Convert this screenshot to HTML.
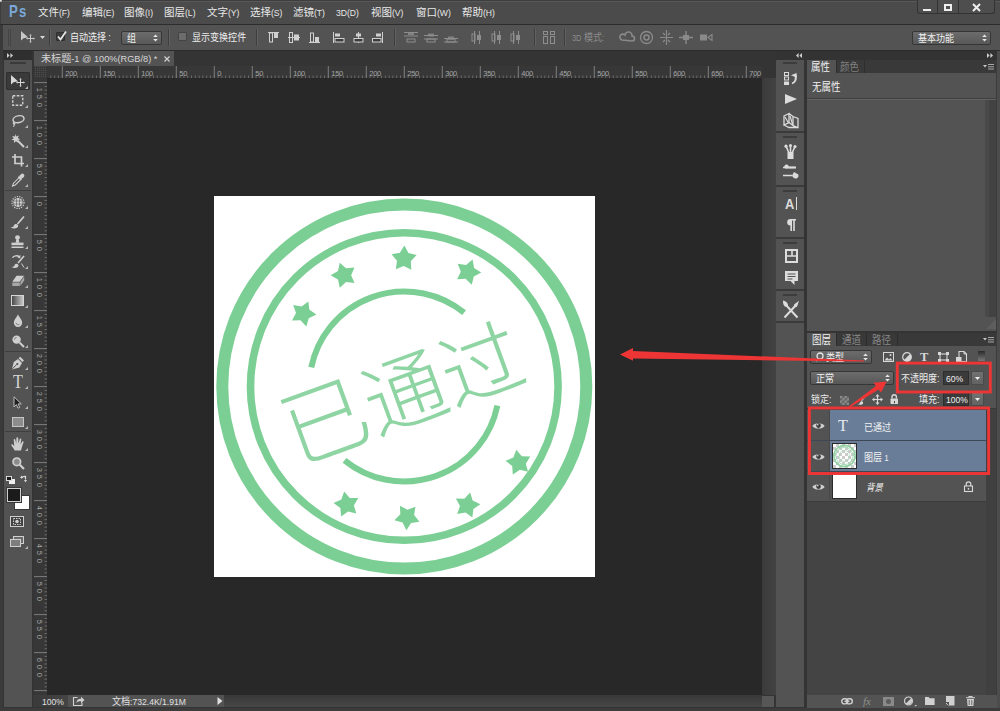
<!DOCTYPE html>
<html lang="zh-CN">
<head>
<meta charset="utf-8">
<title>Photoshop</title>
<style>
html,body{margin:0;padding:0;}
body{width:1000px;height:711px;overflow:hidden;background:#343434;position:relative;
 font-family:"Liberation Sans","Noto Sans CJK SC",sans-serif;font-size:10.5px;color:#e4e4e4;line-height:1;}
.a{position:absolute;}
.t{position:absolute;white-space:nowrap;}
svg{position:absolute;overflow:visible;}
#menubar{left:0;top:0;width:1000px;height:24px;background:#4b4b4b;}
#optbar{left:0;top:25px;width:1000px;height:25px;background:#535353;}
#tabrow{left:33px;top:51px;width:743px;height:15px;background:#343434;}
#doctab{left:34px;top:51px;width:140px;height:15px;background:#535353;}
#hruler{left:34px;top:66px;width:728px;height:12px;background:#373737;}
#vruler{left:34px;top:78px;width:13px;height:617px;background:#373737;}
#canvas{left:47px;top:78px;width:715px;height:617px;background:#282828;}
#doc{left:214px;top:196px;width:380.5px;height:380.5px;background:#fff;}
#status{left:33px;top:695px;width:729px;height:12px;background:#535353;}
#toolbar{left:4px;top:60px;width:28px;height:647px;background:#535353;}
#toolcap{left:4px;top:51px;width:28px;height:9px;background:#2f2f2f;}
#iconstrip{left:776px;top:60px;width:28px;height:647px;background:#535353;}
#rcap{left:776px;top:51px;width:221px;height:9px;background:#333;}
#prop{left:807px;top:60px;width:190px;height:271px;background:#535353;}
#layers{left:807px;top:333px;width:190px;height:375px;background:#535353;}
.mi{position:absolute;top:7px;font-size:10.5px;color:#e8e8e8;white-space:nowrap;}
  .l{font-size:82%;}
.ob{font-size:10.5px;transform:scaleX(.86);transform-origin:0 0;}
.vd{display:block;height:7.5px;transform:rotate(90deg);}
.rl{position:absolute;font-size:7.5px;color:#a6a6a6;white-space:nowrap;letter-spacing:-0.3px;}
</style>
</head>
<body>
<div id="menubar" class="a"></div>
<div id="optbar" class="a"></div>
<div id="tabrow" class="a"></div>
<div id="doctab" class="a"></div>
<div id="hruler" class="a"></div>
<div id="vruler" class="a"></div>
<div id="canvas" class="a"></div>
<div id="doc" class="a"></div>
<div id="status" class="a"></div>
<div id="toolcap" class="a"></div>
<div id="toolbar" class="a"></div>
<div id="rcap" class="a"></div>
<div id="iconstrip" class="a"></div>
<div id="prop" class="a"></div>
<div id="layers" class="a"></div>
<div class="a" style="left:0;top:0;width:1000px;height:1px;background:#3e3e3e"></div><div class="a" style="left:0;top:1px;width:1000px;height:1px;background:#585858"></div><div class="a" style="left:0;top:0;width:1px;height:25px;background:#3e3e3e"></div><div class="a" style="left:0;top:0;width:2px;height:2px;background:#ddd;border-radius:0 0 2px 0"></div>
<div class="a" style="left:0;top:24px;width:1000px;height:1px;background:#2c2c2c"></div>
<div class="a" style="left:0;top:50px;width:1000px;height:1px;background:#2c2c2c"></div>
<div class="a" style="left:0;top:25px;width:3px;height:686px;background:#3a3a3a"></div>
<div class="a" style="left:0;top:708px;width:1000px;height:3px;background:#3c3c3c"></div>
<div class="a" style="left:997px;top:51px;width:3px;height:657px;background:#4c4c4c"></div>
<div class="t" style="left:9px;top:3.2px;font-size:16.5px;font-weight:bold;color:#7aa8d8;letter-spacing:1.6px;transform:scaleX(.8);transform-origin:0 0">Ps</div>
<div class="mi" style="left:38px">文件<span class="l">(F)</span></div>
<div class="mi" style="left:82px">编辑<span class="l">(E)</span></div>
<div class="mi" style="left:124px">图像<span class="l">(I)</span></div>
<div class="mi" style="left:164px">图层<span class="l">(L)</span></div>
<div class="mi" style="left:207px">文字<span class="l">(Y)</span></div>
<div class="mi" style="left:250px">选择<span class="l">(S)</span></div>
<div class="mi" style="left:293px">滤镜<span class="l">(T)</span></div>
<div class="mi" style="left:336px"><span class="l">3D(D)</span></div>
<div class="mi" style="left:371px">视图<span class="l">(V)</span></div>
<div class="mi" style="left:416px">窗口<span class="l">(W)</span></div>
<div class="mi" style="left:462px">帮助<span class="l">(H)</span></div>
<div class="a" style="left:8px;top:29px;width:1px;height:17px;background:#444"></div><div class="a" style="left:10px;top:29px;width:1px;height:17px;background:#444"></div>
<svg style="left:21px;top:31px" width="15" height="13"><path d="M0,0 L0,9.5 L2.6,7.2 L7,6.2 Z" fill="#c8c8c8"/><path d="M9.5,4.2v6.6M6.2,7.5h6.6" stroke="#c8c8c8" stroke-width="1" fill="none"/><path d="M9.5,3l1.3,1.6h-2.6zM9.5,12l1.3,-1.6h-2.6zM5,7.5l1.6,-1.3v2.6zM14,7.5l-1.6,-1.3v2.6z" fill="#c8c8c8"/></svg>
<svg style="left:40px;top:36px" width="6" height="4"><path d="M0,0h5l-2.5,3z" fill="#d8d8d8"/></svg>
<div class="a" style="left:49px;top:29px;width:1px;height:17px;background:#3e3e3e"></div><div class="a" style="left:50px;top:29px;width:1px;height:17px;background:#616161"></div>
<div class="a" style="left:56px;top:32px;width:9px;height:9px;background:#3d3d3d;border:1px solid #2e2e2e;box-sizing:border-box;border-radius:1px"></div>
<svg style="left:56px;top:30px" width="12" height="12"><path d="M2,6.5 L4.5,9.5 L10,1.5" stroke="#e8e8e8" stroke-width="1.7" fill="none"/></svg>
<div class="t ob" style="left:70px;top:31.5px;color:#eee">自动选择<span style="margin-left:2.5px">:</span></div>
<div class="a" style="left:121px;top:31px;width:41px;height:14px;box-sizing:border-box;border:1px solid #363636;border-radius:2px;background:linear-gradient(#6c6c6c,#585858)"></div>
<div class="t ob" style="left:127px;top:32.75px;font-size:10.5px;color:#f0f0f0">组</div>
<svg style="left:152.5px;top:34.0px" width="5" height="8"><path d="M0.2,3L2.5,0.4L4.8,3zM0.2,5L2.5,7.6L4.8,5z" fill="#e8e8e8"/></svg>
<div class="a" style="left:168px;top:29px;width:1px;height:17px;background:#3e3e3e"></div><div class="a" style="left:169px;top:29px;width:1px;height:17px;background:#616161"></div>
<div class="a" style="left:178px;top:32px;width:9px;height:9px;background:#6c6c6c;border:1px solid #444;box-sizing:border-box;border-radius:1px"></div>
<div class="t ob" style="left:192px;top:31.5px;color:#eee">显示变换控件</div>
<div class="a" style="left:256px;top:29px;width:1px;height:17px;background:#3e3e3e"></div><div class="a" style="left:257px;top:29px;width:1px;height:17px;background:#616161"></div>
<svg style="left:268px;top:32px;opacity:1" width="11" height="11"><path d="M0,0.5h11" stroke="#d0d0d0"/><rect x="1.5" y="1" width="3" height="9" fill="none" stroke="#d0d0d0"/><rect x="6" y="1" width="4" height="5" fill="#d0d0d0"/></svg>
<svg style="left:288px;top:32px;opacity:1" width="12" height="11"><path d="M0,5.5h12" stroke="#d0d0d0"/><rect x="1.5" y="0.5" width="3" height="10" fill="none" stroke="#d0d0d0"/><rect x="6" y="2.5" width="5" height="6" fill="#d0d0d0"/></svg>
<svg style="left:309px;top:32px;opacity:1" width="11" height="11"><path d="M0,10.5h11" stroke="#d0d0d0"/><rect x="1.5" y="1" width="3" height="9" fill="none" stroke="#d0d0d0"/><rect x="6" y="5" width="4" height="5" fill="#d0d0d0"/></svg>
<svg style="left:333px;top:31.5px;opacity:1" width="12" height="11"><path d="M0.5,0v11" stroke="#d0d0d0"/><rect x="2" y="1.5" width="5" height="3" fill="#d0d0d0"/><rect x="2" y="6.5" width="9" height="3.5" fill="#3c3c3c" stroke="#d0d0d0"/></svg>
<svg style="left:353px;top:31.5px;opacity:1" width="12" height="11"><path d="M5.5,0v11" stroke="#d0d0d0"/><rect x="3" y="1.5" width="5" height="3" fill="#d0d0d0"/><rect x="1" y="6.5" width="9" height="3.5" fill="#3c3c3c" stroke="#d0d0d0"/></svg>
<svg style="left:372px;top:31.5px;opacity:1" width="12" height="11"><path d="M10.5,0v11" stroke="#d0d0d0"/><rect x="4" y="1.5" width="5" height="3" fill="#d0d0d0"/><rect x="0.5" y="6.5" width="8.5" height="3.5" fill="#3c3c3c" stroke="#d0d0d0"/></svg>
<div class="a" style="left:394px;top:29px;width:1px;height:17px;background:#3e3e3e"></div><div class="a" style="left:395px;top:29px;width:1px;height:17px;background:#616161"></div>
<svg style="left:404px;top:32px;opacity:1" width="14" height="11"><path d="M0,0.5h14M0,4.0h14" stroke="#8e8e8e" stroke-width="1"/><rect x="4" y="0" width="6" height="3" fill="#8e8e8e" opacity=".8"/><rect x="3" y="7" width="8" height="3" fill="none" stroke="#8e8e8e"/></svg>
<svg style="left:424px;top:32px;opacity:1" width="14" height="11"><path d="M0,3.5h14M0,7.0h14" stroke="#8e8e8e" stroke-width="1"/><rect x="4" y="1.5" width="6" height="3" fill="#8e8e8e" opacity=".8"/><rect x="3" y="7" width="8" height="3" fill="none" stroke="#8e8e8e"/></svg>
<svg style="left:444px;top:32px;opacity:1" width="14" height="11"><path d="M0,6.5h14M0,10.0h14" stroke="#8e8e8e" stroke-width="1"/><rect x="4" y="4.5" width="6" height="3" fill="#8e8e8e" opacity=".8"/><rect x="3" y="7" width="8" height="3" fill="none" stroke="#8e8e8e"/></svg>
<svg style="left:471px;top:31px;opacity:1" width="12" height="13"><path d="M3.5,0v13M8.5,0v13" stroke="#8e8e8e" stroke-width="1"/><rect x="1" y="3" width="3" height="7" fill="none" stroke="#8e8e8e"/><rect x="6" y="4" width="4" height="5" fill="#8e8e8e"/></svg>
<svg style="left:491px;top:31px;opacity:1" width="12" height="13"><path d="M3.5,0v13M8.5,0v13" stroke="#8e8e8e" stroke-width="1"/><rect x="1" y="3" width="3" height="7" fill="none" stroke="#8e8e8e"/><rect x="6" y="4" width="4" height="5" fill="#8e8e8e"/></svg>
<svg style="left:510px;top:31px;opacity:1" width="12" height="13"><path d="M3.5,0v13M8.5,0v13" stroke="#8e8e8e" stroke-width="1"/><rect x="1" y="3" width="3" height="7" fill="none" stroke="#8e8e8e"/><rect x="6" y="4" width="4" height="5" fill="#8e8e8e"/></svg>
<div class="a" style="left:534px;top:29px;width:1px;height:17px;background:#3e3e3e"></div><div class="a" style="left:535px;top:29px;width:1px;height:17px;background:#616161"></div>
<svg style="left:543px;top:31px;opacity:1" width="13" height="13"><rect x="0.5" y="0.5" width="4" height="3" fill="none" stroke="#8e8e8e"/><rect x="7.5" y="0.5" width="4" height="3" fill="none" stroke="#8e8e8e"/><rect x="0.5" y="5.5" width="4" height="7" fill="none" stroke="#8e8e8e"/><rect x="7.5" y="5.5" width="4" height="7" fill="none" stroke="#8e8e8e"/></svg>
<div class="a" style="left:564px;top:29px;width:1px;height:17px;background:#3e3e3e"></div><div class="a" style="left:565px;top:29px;width:1px;height:17px;background:#616161"></div>
<div class="t ob" style="left:572px;top:31.5px;color:#8c8c8c"><span class="l">3D</span> 模式<span class="l">:</span></div>
<svg style="left:620px;top:31px;opacity:1" width="15" height="13"><path d="M2,9a3,3 0 1 1 3,-5a3.5,3.5 0 0 1 7,1a2.5,2.5 0 0 1 0,5z" fill="none" stroke="#8a8a8a" stroke-width="1.6"/></svg>
<svg style="left:639px;top:30px;opacity:1" width="15" height="15"><circle cx="7.5" cy="7.5" r="6" fill="none" stroke="#8a8a8a" stroke-width="1.3"/><circle cx="7.5" cy="7.5" r="2.5" fill="none" stroke="#8a8a8a" stroke-width="1.5"/></svg>
<svg style="left:660px;top:30px;opacity:1" width="13" height="15"><path d="M6.5,0v15M0,7.5h13" stroke="#8a8a8a" stroke-width="1.2"/><path d="M3,3l2,2M10,3l-2,2M3,12l2,-2M10,12l-2,-2" stroke="#8a8a8a" stroke-width="1.2"/></svg>
<svg style="left:679px;top:31px;opacity:1" width="14" height="13"><path d="M7,0v13M0,6.5h14" stroke="#8a8a8a" stroke-width="1.4"/><rect x="4" y="4" width="6" height="5" fill="#8a8a8a"/></svg>
<svg style="left:700px;top:34px;opacity:1" width="13" height="7"><rect x="0" y="0.5" width="7" height="6" fill="#8a8a8a"/><path d="M8,3.5l4,-3v6z" fill="none" stroke="#8a8a8a" stroke-width="1.1"/></svg>
<div class="a" style="left:912px;top:31px;width:79px;height:14px;box-sizing:border-box;border:1px solid #363636;border-radius:2px;background:linear-gradient(#6c6c6c,#585858)"></div>
<div class="t ob" style="left:918px;top:32.75px;font-size:10.5px;color:#f0f0f0">基本功能</div>
<svg style="left:981.5px;top:34.0px" width="5" height="8"><path d="M0.2,3L2.5,0.4L4.8,3zM0.2,5L2.5,7.6L4.8,5z" fill="#e8e8e8"/></svg>
<div class="a" style="left:917px;top:0;width:78px;height:14px;background:#4e4e4e;border:1px solid #333;border-top:none;box-sizing:border-box;border-radius:0 0 3px 3px"></div>
<div class="a" style="left:937px;top:0;width:1px;height:13px;background:#333"></div><div class="a" style="left:958px;top:0;width:1px;height:13px;background:#333"></div>
<div class="a" style="left:923px;top:9px;width:8px;height:2px;background:#eee"></div>
<div class="a" style="left:944px;top:4px;width:8px;height:7px;border:2px solid #eee;box-sizing:border-box"></div>
<svg style="left:972px;top:3px" width="9" height="9"><path d="M1,1l7,7M8,1l-7,7" stroke="#eee" stroke-width="2"/></svg>
<svg style="left:7px;top:53px" width="7" height="5"><path d="M0,0l2.6,2.5l-2.6,2.5zM3.4,0l2.6,2.5l-2.6,2.5z" fill="#d0d0d0"/></svg>
<div class="a" style="left:10px;top:62px;width:16px;height:2px;background:#3a3a3a"></div>
<div class="a" style="left:6px;top:72px;width:24px;height:18px;background:#3a3a3a;border-radius:2px;box-shadow:inset 0 0 0 1px #2e2e2e"></div>
<svg style="left:11px;top:75px" width="17" height="13"><path d="M0,0 L0,9.5 L2.6,7.2 L7,6.2 Z" fill="#d8d8d8"/><path d="M9.5,4.2v6.6M6.2,7.5h6.6" stroke="#d8d8d8" stroke-width="1" fill="none"/><path d="M9.5,3l1.3,1.6h-2.6zM9.5,12l1.3,-1.6h-2.6zM5,7.5l1.6,-1.3v2.6zM14,7.5l-1.6,-1.3v2.6z" fill="#d8d8d8"/></svg>
<svg style="left:25px;top:86px" width="3" height="3"><path d="M3,0v3h-3z" fill="#b8b8b8"/></svg>
<svg style="left:12px;top:95px" width="12" height="11"><rect x="0.75" y="0.75" width="10" height="9.5" fill="none" stroke="#cfcfcf" stroke-width="1.4" stroke-dasharray="2.6 1.4"/></svg>
<svg style="left:25px;top:105px" width="3" height="3"><path d="M3,0v3h-3z" fill="#b8b8b8"/></svg>
<svg style="left:11px;top:115px" width="14" height="12"><ellipse cx="7.5" cy="4.2" rx="5.6" ry="3.4" fill="none" stroke="#cfcfcf" stroke-width="1.5" transform="rotate(-12 7.5 4.2)"/><path d="M3,7c-1.5,1 -0.5,2.5 0.5,2.2c0.8,-0.3 0.2,-1.6 -0.6,-1M3.4,9.2l-0.8,2.6" fill="none" stroke="#cfcfcf" stroke-width="1.1"/></svg>
<svg style="left:25px;top:125px" width="3" height="3"><path d="M3,0v3h-3z" fill="#b8b8b8"/></svg>
<svg style="left:11px;top:134px" width="14" height="14"><path d="M4.5,0l0.9,2.6l2.6,-1l-1.2,2.5l2.4,1.2l-2.6,0.8l0.6,2.7l-2.3,-1.6l-2,1.9l0.2,-2.8l-2.8,-0.5l2.4,-1.4l-1.5,-2.4l2.8,0.6z" fill="#cfcfcf"/><path d="M6.5,6.5l6.5,6.5" stroke="#cfcfcf" stroke-width="1.9"/></svg>
<svg style="left:25px;top:145px" width="3" height="3"><path d="M3,0v3h-3z" fill="#b8b8b8"/></svg>
<svg style="left:12px;top:154px" width="12" height="13"><path d="M3,0v9.5h9M0,3h9.5v9.5" fill="none" stroke="#cfcfcf" stroke-width="1.7"/></svg>
<svg style="left:25px;top:164px" width="3" height="3"><path d="M3,0v3h-3z" fill="#b8b8b8"/></svg>
<svg style="left:12px;top:173px" width="13" height="14"><path d="M0.5,13l1,-2.8l5.5,-5.5l1.8,1.8l-5.5,5.5z" fill="none" stroke="#cfcfcf" stroke-width="1.1"/><path d="M6.5,3.5l3,3M8,5l2,-2" stroke="#cfcfcf" stroke-width="1.8"/><path d="M9,1.2a1.9,1.9 0 0 1 2.8,2.8l-1.6,1.6l-2.8,-2.8z" fill="#cfcfcf"/></svg>
<svg style="left:25px;top:184px" width="3" height="3"><path d="M3,0v3h-3z" fill="#b8b8b8"/></svg>
<div class="a" style="left:5px;top:190px;width:26px;height:1px;background:#3f3f3f"></div>
<svg style="left:11px;top:196px" width="14" height="13"><circle cx="7" cy="6.5" r="4.6" fill="#cfcfcf"/><circle cx="7" cy="6.5" r="6" fill="none" stroke="#cfcfcf" stroke-width="1.2" stroke-dasharray="1.2 1.2"/><path d="M3,5h8M3,8h8M5.5,2.5v8M8.5,2.5v8" stroke="#535353" stroke-width=".6"/></svg>
<svg style="left:25px;top:206px" width="3" height="3"><path d="M3,0v3h-3z" fill="#b8b8b8"/></svg>
<svg style="left:10px;top:216px" width="15" height="13"><path d="M14,0.5l-6.5,7.5" stroke="#cfcfcf" stroke-width="1.7"/><path d="M0.5,11.5c2,0 3,-0.6 3.6,-2.4c0.5,-1.2 2.4,-1.5 3.4,-0.6c1.1,1 0.8,2.4 -0.4,3.2c-1.8,1.2 -4.5,1 -6.6,-0.2z" fill="#cfcfcf"/></svg>
<svg style="left:25px;top:226px" width="3" height="3"><path d="M3,0v3h-3z" fill="#b8b8b8"/></svg>
<svg style="left:11px;top:235px" width="13" height="14"><circle cx="6.5" cy="2.6" r="2.4" fill="#cfcfcf"/><path d="M5.2,4.5h2.6l0.5,3.2h-3.6z" fill="#cfcfcf"/><rect x="0.5" y="7.6" width="12" height="2.6" fill="#cfcfcf"/><rect x="0.5" y="11.5" width="12" height="1.5" fill="#cfcfcf"/></svg>
<svg style="left:25px;top:246px" width="3" height="3"><path d="M3,0v3h-3z" fill="#b8b8b8"/></svg>
<svg style="left:11px;top:255px" width="14" height="13"><path d="M13,1l-6,7" stroke="#cfcfcf" stroke-width="1.6"/><path d="M0.5,12c2,0 2.8,-0.6 3.3,-2.2c0.4,-1.1 2.2,-1.4 3.1,-0.5c1,0.9 0.7,2.2 -0.4,2.9c-1.6,1 -4,0.9 -6,-0.2z" fill="#cfcfcf"/><path d="M1.5,2.8a4,3 0 0 1 7,-0.8" fill="none" stroke="#cfcfcf" stroke-width="1.3"/><path d="M9.5,0l-0.3,3.4l-3,-1.2z" fill="#cfcfcf"/><path d="M10.5,8.5l2.5,4" stroke="#cfcfcf" stroke-width="1"/></svg>
<svg style="left:25px;top:266px" width="3" height="3"><path d="M3,0v3h-3z" fill="#b8b8b8"/></svg>
<svg style="left:11px;top:275px" width="14" height="12"><path d="M5.5,0.8h7.5l-4.2,6h-7.5z" fill="#cfcfcf"/><path d="M1.3,7.5h7.5v3.6h-7.5zM9.4,7.2l3.8,-5.6v3.8l-3.8,5.5z" fill="#a8a8a8"/></svg>
<svg style="left:25px;top:285px" width="3" height="3"><path d="M3,0v3h-3z" fill="#b8b8b8"/></svg>
<div class="a" style="left:11px;top:295px;width:13px;height:11px;box-sizing:border-box;border:1px solid #d6d6d6;background:linear-gradient(90deg,#4a4a4a,#c8c8c8)"></div>
<svg style="left:25px;top:305px" width="3" height="3"><path d="M3,0v3h-3z" fill="#b8b8b8"/></svg>
<svg style="left:13px;top:314px" width="10" height="13"><path d="M5,0.5c1.2,3 4.2,5.2 4.2,8.2a4.2,4.2 0 0 1 -8.4,0c0,-3 3,-5.2 4.2,-8.2z" fill="#cfcfcf"/><path d="M3,9a2.2,2.2 0 0 0 3.5,1.2" stroke="#777" stroke-width="1" fill="none"/></svg>
<svg style="left:25px;top:325px" width="3" height="3"><path d="M3,0v3h-3z" fill="#b8b8b8"/></svg>
<svg style="left:12px;top:335px" width="13" height="13"><circle cx="4.6" cy="4.6" r="4.2" fill="#cfcfcf"/><path d="M7.5,7.5l4.5,4.5" stroke="#cfcfcf" stroke-width="2"/><path d="M2.5,4.5a2.2,2.2 0 0 1 2,-2" stroke="#777" stroke-width="1" fill="none"/></svg>
<svg style="left:25px;top:345px" width="3" height="3"><path d="M3,0v3h-3z" fill="#b8b8b8"/></svg>
<div class="a" style="left:5px;top:351px;width:26px;height:1px;background:#3f3f3f"></div>
<svg style="left:11px;top:356px" width="14" height="14"><path d="M9.2,0.8l3.8,3.8l-1.6,1.4l-3.8,-3.8z" fill="#cfcfcf"/><path d="M7,3l4,4l-2.6,4.6l-7.6,2l2,-7.6z" fill="#cfcfcf"/><path d="M1.2,13l4.6,-4.6" stroke="#535353" stroke-width="1"/><circle cx="6.3" cy="8" r="1.1" fill="#535353"/></svg>
<svg style="left:25px;top:367px" width="3" height="3"><path d="M3,0v3h-3z" fill="#b8b8b8"/></svg>
<div class="t" style="left:12.5px;top:372.5px;font-family:'Liberation Serif',serif;font-size:18px;color:#d6d6d6;transform:scaleX(.9);transform-origin:0 0">T</div>
<svg style="left:25px;top:386px" width="3" height="3"><path d="M3,0v3h-3z" fill="#b8b8b8"/></svg>
<svg style="left:13px;top:396px" width="9" height="13"><path d="M1,0.8v10l2.4,-2.2l1.6,3.6l1.7,-0.8l-1.6,-3.5h3.2z" fill="#1e1e1e" stroke="#bdbdbd" stroke-width="1"/></svg>
<svg style="left:25px;top:406px" width="3" height="3"><path d="M3,0v3h-3z" fill="#b8b8b8"/></svg>
<div class="a" style="left:12px;top:417px;width:12px;height:10px;box-sizing:border-box;border:1px solid #c6c6c6;background:#8d8d8d"></div>
<svg style="left:25px;top:426px" width="3" height="3"><path d="M3,0v3h-3z" fill="#b8b8b8"/></svg>
<div class="a" style="left:5px;top:431px;width:26px;height:1px;background:#3f3f3f"></div>
<svg style="left:11px;top:437px" width="14" height="14"><path d="M3.6,13.5c-0.6,-2 -2.6,-3.6 -3.2,-5.2c-0.3,-1 0.9,-1.5 1.6,-0.6l1.3,1.6l-0.6,-6.2c-0.1,-1.2 1.4,-1.4 1.7,-0.2l0.8,3.8l0.2,-5.4c0,-1.3 1.7,-1.3 1.8,0l0.3,5.3l1.2,-4.4c0.3,-1.2 1.8,-0.8 1.6,0.4l-0.8,4.8l1.6,-2.6c0.6,-1 1.9,-0.3 1.4,0.8c-1.2,2.6 -1.6,5.2 -2.6,7.9z" fill="#cfcfcf"/></svg>
<svg style="left:25px;top:448px" width="3" height="3"><path d="M3,0v3h-3z" fill="#b8b8b8"/></svg>
<svg style="left:12px;top:457px" width="13" height="13"><circle cx="4.8" cy="4.8" r="3.8" fill="#8c8c8c" stroke="#cfcfcf" stroke-width="1.7"/><path d="M7.8,7.8l4.2,4.2" stroke="#cfcfcf" stroke-width="2.2"/></svg>
<div class="a" style="left:9px;top:479px;width:6px;height:5px;background:#eee"></div><div class="a" style="left:6px;top:476px;width:6px;height:5px;background:#1c1c1c;border:1px solid #d8d8d8;box-sizing:border-box"></div>
<svg style="left:20px;top:475px" width="8" height="8"><path d="M1.5,3.5c0,-2 2,-2.2 4,-2.2v3.2" fill="none" stroke="#d8d8d8" stroke-width="1.2"/><path d="M0,3l1.5,-2.4l1.5,2.4zM4,5l1.5,2.4l1.5,-2.4z" fill="#d8d8d8"/></svg>
<div class="a" style="left:15px;top:496px;width:14px;height:13px;background:#fff;box-shadow:0 0 0 1px #3a3a3a"></div>
<div class="a" style="left:7px;top:488px;width:14px;height:14px;background:#1b1b1b;border:1px solid #cfcfcf;box-sizing:border-box;box-shadow:0 0 0 1px #3a3a3a"></div>
<div class="a" style="left:10px;top:516px;width:14px;height:11px;box-sizing:border-box;border:1px solid #cfcfcf;background:#424242"></div>
<svg style="left:13px;top:518px" width="8" height="7"><rect x="0.5" y="0.5" width="7" height="6" fill="none" stroke="#cfcfcf" stroke-dasharray="1.5 1"/><circle cx="4" cy="3.5" r="1.8" fill="#cfcfcf"/></svg>
<div class="a" style="left:13px;top:536px;width:11px;height:8px;box-sizing:border-box;border:1px solid #cfcfcf;background:#6a6a6a"></div><div class="a" style="left:10px;top:539px;width:11px;height:8px;box-sizing:border-box;border:1px solid #cfcfcf;background:#7d7d7d"></div>
<svg style="left:25px;top:546px" width="3" height="3"><path d="M3,0v3h-3z" fill="#b8b8b8"/></svg>
<div class="t" style="left:41px;top:53px;font-size:10.5px;color:#d6d6d6;transform:scaleX(.96);transform-origin:0 0">未标题<span style="font-size:9.6px">-1 @ 100%(RGB/8) *</span></div>
<svg style="left:164px;top:56px" width="6" height="6"><path d="M0.5,0.5l5,5M5.5,0.5l-5,5" stroke="#d0d0d0" stroke-width="1.2"/></svg>
<div class="a" style="left:34px;top:66px;width:13px;height:12px;background:#4a4a4a;background-image:repeating-linear-gradient(90deg,rgba(0,0,0,.18) 0 1px,transparent 1px 2px),repeating-linear-gradient(0deg,rgba(0,0,0,.18) 0 1px,transparent 1px 2px)"></div>
<svg style="left:47px;top:66px" width="715" height="12"><path d="M3.9,9.5v2.5M7.7,9.5v2.5M11.5,9.5v2.5M15.3,9.5v2.5M19.1,9.5v2.5M22.9,9.5v2.5M26.7,9.5v2.5M30.5,9.5v2.5M34.3,9.5v2.5M38.1,9.5v2.5M41.9,9.5v2.5M45.7,9.5v2.5M49.5,9.5v2.5M53.3,9.5v2.5M57.1,9.5v2.5M60.9,9.5v2.5M64.7,9.5v2.5M68.5,9.5v2.5M72.3,9.5v2.5M76.1,9.5v2.5M79.9,9.5v2.5M83.7,9.5v2.5M87.5,9.5v2.5M91.3,9.5v2.5M95.1,9.5v2.5M98.9,9.5v2.5M102.7,9.5v2.5M106.5,9.5v2.5M110.3,9.5v2.5M114.1,9.5v2.5M117.9,9.5v2.5M121.7,9.5v2.5M125.5,9.5v2.5M129.3,9.5v2.5M133.1,9.5v2.5M136.9,9.5v2.5M140.7,9.5v2.5M144.5,9.5v2.5M148.3,9.5v2.5M152.1,9.5v2.5M155.9,9.5v2.5M159.7,9.5v2.5M163.5,9.5v2.5M167.3,9.5v2.5M171.1,9.5v2.5M174.9,9.5v2.5M178.7,9.5v2.5M182.5,9.5v2.5M186.3,9.5v2.5M190.1,9.5v2.5M193.9,9.5v2.5M197.7,9.5v2.5M201.5,9.5v2.5M205.3,9.5v2.5M209.1,9.5v2.5M212.9,9.5v2.5M216.7,9.5v2.5M220.5,9.5v2.5M224.3,9.5v2.5M228.1,9.5v2.5M231.9,9.5v2.5M235.7,9.5v2.5M239.5,9.5v2.5M243.3,9.5v2.5M247.1,9.5v2.5M250.9,9.5v2.5M254.7,9.5v2.5M258.5,9.5v2.5M262.3,9.5v2.5M266.1,9.5v2.5M269.9,9.5v2.5M273.7,9.5v2.5M277.5,9.5v2.5M281.3,9.5v2.5M285.1,9.5v2.5M288.9,9.5v2.5M292.7,9.5v2.5M296.5,9.5v2.5M300.3,9.5v2.5M304.1,9.5v2.5M307.9,9.5v2.5M311.7,9.5v2.5M315.5,9.5v2.5M319.3,9.5v2.5M323.1,9.5v2.5M326.9,9.5v2.5M330.7,9.5v2.5M334.5,9.5v2.5M338.3,9.5v2.5M342.1,9.5v2.5M345.9,9.5v2.5M349.7,9.5v2.5M353.5,9.5v2.5M357.3,9.5v2.5M361.1,9.5v2.5M364.9,9.5v2.5M368.7,9.5v2.5M372.5,9.5v2.5M376.3,9.5v2.5M380.1,9.5v2.5M383.9,9.5v2.5M387.7,9.5v2.5M391.5,9.5v2.5M395.3,9.5v2.5M399.1,9.5v2.5M402.9,9.5v2.5M406.7,9.5v2.5M410.5,9.5v2.5M414.3,9.5v2.5M418.1,9.5v2.5M421.9,9.5v2.5M425.7,9.5v2.5M429.5,9.5v2.5M433.3,9.5v2.5M437.1,9.5v2.5M440.9,9.5v2.5M444.7,9.5v2.5M448.5,9.5v2.5M452.3,9.5v2.5M456.1,9.5v2.5M459.9,9.5v2.5M463.7,9.5v2.5M467.5,9.5v2.5M471.3,9.5v2.5M475.1,9.5v2.5M478.9,9.5v2.5M482.7,9.5v2.5M486.5,9.5v2.5M490.3,9.5v2.5M494.1,9.5v2.5M497.9,9.5v2.5M501.7,9.5v2.5M505.5,9.5v2.5M509.3,9.5v2.5M513.1,9.5v2.5M516.9,9.5v2.5M520.7,9.5v2.5M524.5,9.5v2.5M528.3,9.5v2.5M532.1,9.5v2.5M535.9,9.5v2.5M539.7,9.5v2.5M543.5,9.5v2.5M547.3,9.5v2.5M551.1,9.5v2.5M554.9,9.5v2.5M558.7,9.5v2.5M562.5,9.5v2.5M566.3,9.5v2.5M570.1,9.5v2.5M573.9,9.5v2.5M577.7,9.5v2.5M581.5,9.5v2.5M585.3,9.5v2.5M589.1,9.5v2.5M592.9,9.5v2.5M596.7,9.5v2.5M600.5,9.5v2.5M604.3,9.5v2.5M608.1,9.5v2.5M611.9,9.5v2.5M615.7,9.5v2.5M619.5,9.5v2.5M623.3,9.5v2.5M627.1,9.5v2.5M630.9,9.5v2.5M634.7,9.5v2.5M638.5,9.5v2.5M642.3,9.5v2.5M646.1,9.5v2.5M649.9,9.5v2.5M653.7,9.5v2.5M657.5,9.5v2.5M661.3,9.5v2.5M665.1,9.5v2.5M668.9,9.5v2.5M672.7,9.5v2.5M676.5,9.5v2.5M680.3,9.5v2.5M684.1,9.5v2.5M687.9,9.5v2.5M691.7,9.5v2.5M695.5,9.5v2.5M699.3,9.5v2.5M703.1,9.5v2.5M706.9,9.5v2.5M710.7,9.5v2.5" stroke="#7c7c7c" stroke-width="1" fill="none" opacity=".75"/><path d="M15.3,0v12M53.3,0v12M91.3,0v12M129.3,0v12M167.3,0v12M205.3,0v12M243.3,0v12M281.3,0v12M319.3,0v12M357.3,0v12M395.3,0v12M433.3,0v12M471.3,0v12M509.3,0v12M547.3,0v12M585.3,0v12M623.3,0v12M661.3,0v12M699.3,0v12" stroke="#7c7c7c" stroke-width="1" fill="none"/></svg>
<div class="rl" style="left:65.3px;top:70px">200</div><div class="rl" style="left:103.3px;top:70px">150</div><div class="rl" style="left:141.3px;top:70px">100</div><div class="rl" style="left:179.3px;top:70px">50</div><div class="rl" style="left:217.3px;top:70px">0</div><div class="rl" style="left:255.3px;top:70px">50</div><div class="rl" style="left:293.3px;top:70px">100</div><div class="rl" style="left:331.3px;top:70px">150</div><div class="rl" style="left:369.3px;top:70px">200</div><div class="rl" style="left:407.3px;top:70px">250</div><div class="rl" style="left:445.3px;top:70px">300</div><div class="rl" style="left:483.3px;top:70px">350</div><div class="rl" style="left:521.3px;top:70px">400</div><div class="rl" style="left:559.3px;top:70px">450</div><div class="rl" style="left:597.3px;top:70px">500</div><div class="rl" style="left:635.3px;top:70px">550</div><div class="rl" style="left:673.3px;top:70px">600</div><div class="rl" style="left:711.3px;top:70px">650</div><div class="rl" style="left:749.3px;top:70px">700</div>
<svg style="left:34px;top:78px" width="13" height="617"><path d="M10.5,4.6h2.5M10.5,8.4h2.5M10.5,12.2h2.5M10.5,16.0h2.5M10.5,19.8h2.5M10.5,23.6h2.5M10.5,27.4h2.5M10.5,31.2h2.5M10.5,35.0h2.5M10.5,38.8h2.5M10.5,42.6h2.5M10.5,46.4h2.5M10.5,50.2h2.5M10.5,54.0h2.5M10.5,57.8h2.5M10.5,61.6h2.5M10.5,65.4h2.5M10.5,69.2h2.5M10.5,73.0h2.5M10.5,76.8h2.5M10.5,80.6h2.5M10.5,84.4h2.5M10.5,88.2h2.5M10.5,92.0h2.5M10.5,95.8h2.5M10.5,99.6h2.5M10.5,103.4h2.5M10.5,107.2h2.5M10.5,111.0h2.5M10.5,114.8h2.5M10.5,118.6h2.5M10.5,122.4h2.5M10.5,126.2h2.5M10.5,130.0h2.5M10.5,133.8h2.5M10.5,137.6h2.5M10.5,141.4h2.5M10.5,145.2h2.5M10.5,149.0h2.5M10.5,152.8h2.5M10.5,156.6h2.5M10.5,160.4h2.5M10.5,164.2h2.5M10.5,168.0h2.5M10.5,171.8h2.5M10.5,175.6h2.5M10.5,179.4h2.5M10.5,183.2h2.5M10.5,187.0h2.5M10.5,190.8h2.5M10.5,194.6h2.5M10.5,198.4h2.5M10.5,202.2h2.5M10.5,206.0h2.5M10.5,209.8h2.5M10.5,213.6h2.5M10.5,217.4h2.5M10.5,221.2h2.5M10.5,225.0h2.5M10.5,228.8h2.5M10.5,232.6h2.5M10.5,236.4h2.5M10.5,240.2h2.5M10.5,244.0h2.5M10.5,247.8h2.5M10.5,251.6h2.5M10.5,255.4h2.5M10.5,259.2h2.5M10.5,263.0h2.5M10.5,266.8h2.5M10.5,270.6h2.5M10.5,274.4h2.5M10.5,278.2h2.5M10.5,282.0h2.5M10.5,285.8h2.5M10.5,289.6h2.5M10.5,293.4h2.5M10.5,297.2h2.5M10.5,301.0h2.5M10.5,304.8h2.5M10.5,308.6h2.5M10.5,312.4h2.5M10.5,316.2h2.5M10.5,320.0h2.5M10.5,323.8h2.5M10.5,327.6h2.5M10.5,331.4h2.5M10.5,335.2h2.5M10.5,339.0h2.5M10.5,342.8h2.5M10.5,346.6h2.5M10.5,350.4h2.5M10.5,354.2h2.5M10.5,358.0h2.5M10.5,361.8h2.5M10.5,365.6h2.5M10.5,369.4h2.5M10.5,373.2h2.5M10.5,377.0h2.5M10.5,380.8h2.5M10.5,384.6h2.5M10.5,388.4h2.5M10.5,392.2h2.5M10.5,396.0h2.5M10.5,399.8h2.5M10.5,403.6h2.5M10.5,407.4h2.5M10.5,411.2h2.5M10.5,415.0h2.5M10.5,418.8h2.5M10.5,422.6h2.5M10.5,426.4h2.5M10.5,430.2h2.5M10.5,434.0h2.5M10.5,437.8h2.5M10.5,441.6h2.5M10.5,445.4h2.5M10.5,449.2h2.5M10.5,453.0h2.5M10.5,456.8h2.5M10.5,460.6h2.5M10.5,464.4h2.5M10.5,468.2h2.5M10.5,472.0h2.5M10.5,475.8h2.5M10.5,479.6h2.5M10.5,483.4h2.5M10.5,487.2h2.5M10.5,491.0h2.5M10.5,494.8h2.5M10.5,498.6h2.5M10.5,502.4h2.5M10.5,506.2h2.5M10.5,510.0h2.5M10.5,513.8h2.5M10.5,517.6h2.5M10.5,521.4h2.5M10.5,525.2h2.5M10.5,529.0h2.5M10.5,532.8h2.5M10.5,536.6h2.5M10.5,540.4h2.5M10.5,544.2h2.5M10.5,548.0h2.5M10.5,551.8h2.5M10.5,555.6h2.5M10.5,559.4h2.5M10.5,563.2h2.5M10.5,567.0h2.5M10.5,570.8h2.5M10.5,574.6h2.5M10.5,578.4h2.5M10.5,582.2h2.5M10.5,586.0h2.5M10.5,589.8h2.5M10.5,593.6h2.5M10.5,597.4h2.5M10.5,601.2h2.5M10.5,605.0h2.5M10.5,608.8h2.5M10.5,612.6h2.5" stroke="#7c7c7c" stroke-width="1" fill="none" opacity=".75"/><path d="M0,4.6h13M0,42.6h13M0,80.6h13M0,118.6h13M0,156.6h13M0,194.6h13M0,232.6h13M0,270.6h13M0,308.6h13M0,346.6h13M0,384.6h13M0,422.6h13M0,460.6h13M0,498.6h13M0,536.6h13M0,574.6h13M0,612.6h13" stroke="#7c7c7c" stroke-width="1" fill="none"/></svg>
<div class="rl" style="left:36.5px;top:85.6px;line-height:7.5px;text-align:center;width:5px"><span class="vd">1</span><span class="vd">5</span><span class="vd">0</span></div><div class="rl" style="left:36.5px;top:123.6px;line-height:7.5px;text-align:center;width:5px"><span class="vd">1</span><span class="vd">0</span><span class="vd">0</span></div><div class="rl" style="left:36.5px;top:161.6px;line-height:7.5px;text-align:center;width:5px"><span class="vd">5</span><span class="vd">0</span></div><div class="rl" style="left:36.5px;top:199.6px;line-height:7.5px;text-align:center;width:5px"><span class="vd">0</span></div><div class="rl" style="left:36.5px;top:237.6px;line-height:7.5px;text-align:center;width:5px"><span class="vd">5</span><span class="vd">0</span></div><div class="rl" style="left:36.5px;top:275.6px;line-height:7.5px;text-align:center;width:5px"><span class="vd">1</span><span class="vd">0</span><span class="vd">0</span></div><div class="rl" style="left:36.5px;top:313.6px;line-height:7.5px;text-align:center;width:5px"><span class="vd">1</span><span class="vd">5</span><span class="vd">0</span></div><div class="rl" style="left:36.5px;top:351.6px;line-height:7.5px;text-align:center;width:5px"><span class="vd">2</span><span class="vd">0</span><span class="vd">0</span></div><div class="rl" style="left:36.5px;top:389.6px;line-height:7.5px;text-align:center;width:5px"><span class="vd">2</span><span class="vd">5</span><span class="vd">0</span></div><div class="rl" style="left:36.5px;top:427.6px;line-height:7.5px;text-align:center;width:5px"><span class="vd">3</span><span class="vd">0</span><span class="vd">0</span></div><div class="rl" style="left:36.5px;top:465.6px;line-height:7.5px;text-align:center;width:5px"><span class="vd">3</span><span class="vd">5</span><span class="vd">0</span></div><div class="rl" style="left:36.5px;top:503.6px;line-height:7.5px;text-align:center;width:5px"><span class="vd">4</span><span class="vd">0</span><span class="vd">0</span></div><div class="rl" style="left:36.5px;top:541.6px;line-height:7.5px;text-align:center;width:5px"><span class="vd">4</span><span class="vd">5</span><span class="vd">0</span></div><div class="rl" style="left:36.5px;top:579.6px;line-height:7.5px;text-align:center;width:5px"><span class="vd">5</span><span class="vd">0</span><span class="vd">0</span></div><div class="rl" style="left:36.5px;top:617.6px;line-height:7.5px;text-align:center;width:5px"><span class="vd">5</span><span class="vd">5</span><span class="vd">0</span></div><div class="rl" style="left:36.5px;top:655.6px;line-height:7.5px;text-align:center;width:5px"><span class="vd">6</span><span class="vd">0</span><span class="vd">0</span></div><div class="rl" style="left:36.5px;top:693.6px;line-height:7.5px;text-align:center;width:5px"><span class="vd">6</span><span class="vd">5</span><span class="vd">0</span></div>
<div class="a" style="left:224px;top:695px;width:538px;height:12px;background:linear-gradient(#383838,#474747)"></div>
<div class="a" style="left:33px;top:695px;width:35px;height:12px;background:linear-gradient(90deg,#3a3a3a,#444)"></div>
<div class="a" style="left:762px;top:78px;width:14px;height:617px;background:linear-gradient(90deg,#3b3b3b,#424242)"></div>
<div class="a" style="left:762px;top:696px;width:12px;height:11px;background:#575757"></div>
<div class="t" style="left:42px;top:696.5px;font-size:9.5px;color:#e0e0e0;transform:scaleX(.9);transform-origin:0 0">100%</div>
<svg style="left:73px;top:696px" width="12" height="10"><path d="M4.5,1.5h-4v8h8.5v-3" fill="none" stroke="#d0d0d0" stroke-width="1.1"/><path d="M3.5,7c0,-3 1.5,-4.2 4.5,-4.2v-2l3.5,3.2l-3.5,3.2v-2c-2,0 -3.4,0.2 -4.5,1.8z" fill="#d0d0d0"/></svg>
<div class="t ob" style="left:112px;top:695.5px;color:#e0e0e0">文档<span style="font-size:95%">:732.4K/1.91M</span></div>
<svg style="left:217px;top:697px" width="6" height="8"><path d="M0.5,0l5,4l-5,4z" fill="#e0e0e0"/></svg>
<svg style="left:795.5px;top:53px" width="7" height="5"><path d="M2.6,0l-2.6,2.5l2.6,2.5zM6,0l-2.6,2.5l2.6,2.5z" fill="#d0d0d0"/></svg>
<svg style="left:987px;top:53px" width="7" height="5"><path d="M0,0l2.6,2.5l-2.6,2.5zM3.4,0l2.6,2.5l-2.6,2.5z" fill="#d0d0d0"/></svg>
<div class="a" style="left:783px;top:62px;width:14px;height:2px;background:#3c3c3c"></div>
<svg style="left:784px;top:72px" width="14" height="13"><rect x="0.5" y="0.5" width="4" height="3" fill="none" stroke="#dcdcdc"/><rect x="0.5" y="5" width="4" height="3" fill="none" stroke="#dcdcdc"/><rect x="0" y="9.5" width="5" height="3.5" fill="#dcdcdc"/><path d="M8,11.5c3,-1 4.6,-4 3.4,-7.5" fill="none" stroke="#dcdcdc" stroke-width="1.8"/><path d="M7,3.2l5.5,-2.2l0.6,4.8z" fill="#dcdcdc"/></svg>
<svg style="left:785px;top:94px" width="12" height="10"><path d="M0,0l12,5l-12,5z" fill="#dcdcdc"/></svg>
<svg style="left:783px;top:113px" width="16" height="15"><path d="M1,3l5,-2.5v9l-5,2.5zM6,0.5l4,3v9l-4,-3M10,3.5l5,2v9l-5,-2M1,12l5,2.5l4,0l5,0" fill="none" stroke="#dcdcdc" stroke-width="1.3"/><path d="M2,4l3.5,6M7,3l2.5,8" stroke="#dcdcdc" stroke-width="1.2"/></svg>
<div class="a" style="left:776px;top:131px;width:28px;height:2px;background:#3a3a3a"></div>
<div class="a" style="left:783px;top:136px;width:14px;height:2px;background:#3c3c3c"></div>
<svg style="left:784px;top:144px" width="13" height="15"><rect x="3.5" y="8" width="6" height="7" fill="#dcdcdc"/><path d="M4.5,8l-2.5,-6M6.5,8v-7M8.5,8l2.5,-5.5" stroke="#dcdcdc" stroke-width="1.6"/><circle cx="2" cy="2.2" r="1.6" fill="#dcdcdc"/><circle cx="6.5" cy="1.5" r="1.5" fill="#dcdcdc"/><circle cx="11" cy="2.6" r="1.6" fill="#dcdcdc"/></svg>
<svg style="left:783px;top:164px" width="16" height="16"><path d="M0,3.5h12M0,11.5h9" stroke="#dcdcdc" stroke-width="1.6"/><circle cx="3.5" cy="2.6" r="2.2" fill="#dcdcdc"/><path d="M5,3.5h8" stroke="#dcdcdc" stroke-width="2"/><path d="M9,11.5l2,-3.5l4,2.2c1,1 0.6,3.8 -1.6,4.3c-2,0.4 -3.6,-1 -4.4,-3z" fill="#dcdcdc"/></svg>
<div class="a" style="left:776px;top:185px;width:28px;height:2px;background:#3a3a3a"></div>
<div class="a" style="left:783px;top:190px;width:14px;height:2px;background:#3c3c3c"></div>
<div class="t" style="left:784.5px;top:196.5px;font-size:14px;font-weight:bold;color:#dcdcdc;transform:scaleX(.92);transform-origin:0 0">A</div><div class="a" style="left:795.5px;top:197px;width:1px;height:13px;background:#dcdcdc"></div>
<svg style="left:786px;top:219px" width="10" height="12"><path d="M4.5,0h5.5v1.6h-1.2v10.4h-1.6v-10.4h-1.2v10.4h-1.6v-5.6a3.2,3.2 0 0 1 0,-6.4z" fill="#dcdcdc"/></svg>
<div class="a" style="left:776px;top:237px;width:28px;height:2px;background:#3a3a3a"></div>
<div class="a" style="left:783px;top:242px;width:14px;height:2px;background:#3c3c3c"></div>
<svg style="left:785px;top:249px" width="13" height="14"><rect x="1" y="1" width="11" height="12" fill="none" stroke="#dcdcdc" stroke-width="2"/><path d="M1,7h11M7,1v6" stroke="#dcdcdc" stroke-width="1.6"/></svg>
<svg style="left:785px;top:271px" width="13" height="14"><path d="M0,0h13v10h-3.5l-0,4l-4,-4h-5.5z" fill="#dcdcdc"/><path d="M2.5,3h8M2.5,5.5h8M2.5,8h5" stroke="#535353" stroke-width="1.1"/></svg>
<div class="a" style="left:776px;top:289px;width:28px;height:2px;background:#3a3a3a"></div>
<div class="a" style="left:783px;top:294px;width:14px;height:2px;background:#3c3c3c"></div>
<svg style="left:782px;top:300px" width="18" height="19"><path d="M3,4l12.5,13.5M15,4l-12.5,13.5" stroke="#dcdcdc" stroke-width="2"/><path d="M1,0.5c2,0.2 4.5,1.8 5,4.2c0.3,1.5 -1.5,2.8 -3,1.8c-1.6,-1 -2.2,-3.5 -2,-6z" fill="#dcdcdc"/><path d="M17,0.8l-4.6,3.4c-0.8,0.8 -0.6,2 0.2,2.6c0.8,0.6 1.8,0.4 2.4,-0.4z" fill="#dcdcdc"/></svg>
<div class="a" style="left:776px;top:321px;width:28px;height:2px;background:#3a3a3a"></div>
<div class="a" style="left:807px;top:60px;width:190px;height:13px;background:#393939"></div>
<div class="a" style="left:807px;top:60px;width:29px;height:13px;background:#535353"></div>
<div class="t ob" style="left:811px;top:61.5px;color:#f0f0f0;font-size:11px">属性</div>
<div class="t ob" style="left:840px;top:61.5px;color:#7e7e7e;font-size:11px">颜色</div>
<div class="a" style="left:836px;top:60px;width:1px;height:13px;background:#2e2e2e"></div><div class="a" style="left:864px;top:60px;width:1px;height:13px;background:#2e2e2e"></div>
<svg style="left:983px;top:64px" width="11" height="6"><path d="M0,1h4l-2,2.6z" fill="#c8c8c8"/><path d="M5,0.5h6M5,2.8h6M5,5h6" stroke="#a8a8a8" stroke-width="1"/></svg>
<div class="t ob" style="left:812px;top:81.5px;color:#f0f0f0;font-size:11px">无属性</div>
<div class="a" style="left:807px;top:98px;width:190px;height:1px;background:#3e3e3e"></div><div class="a" style="left:807px;top:99px;width:190px;height:1px;background:#646464"></div>
<div class="a" style="left:985px;top:100px;width:11px;height:217px;background:linear-gradient(90deg,#494949 0 4px,#424242 4px)"></div>
<svg style="left:986px;top:319px" width="10" height="10"><path d="M10,0v10h-10z" fill="#5e5e5e"/></svg>
<div class="a" style="left:996px;top:60px;width:1px;height:271px;background:#3c3c3c"></div>
<div class="a" style="left:807px;top:333px;width:190px;height:13px;background:#393939"></div>
<div class="a" style="left:807px;top:333px;width:29px;height:14px;background:#535353"></div>
<div class="t ob" style="left:811.5px;top:334.5px;color:#f0f0f0;font-size:11px">图层</div>
<div class="t ob" style="left:841.5px;top:334.5px;color:#8a8a8a;font-size:11px">通道</div>
<div class="t ob" style="left:871.5px;top:334.5px;color:#8a8a8a;font-size:11px">路径</div>
<div class="a" style="left:836px;top:333px;width:1px;height:13px;background:#2c2c2c"></div><div class="a" style="left:866px;top:333px;width:1px;height:13px;background:#2c2c2c"></div><div class="a" style="left:897px;top:333px;width:1px;height:13px;background:#2c2c2c"></div>
<svg style="left:983px;top:337px" width="11" height="6"><path d="M0,1h4l-2,2.6z" fill="#c8c8c8"/><path d="M5,0.5h6M5,2.8h6M5,5h6" stroke="#a8a8a8" stroke-width="1"/></svg>
<div class="a" style="left:996px;top:333px;width:1px;height:375px;background:#3c3c3c"></div>
<div class="a" style="left:810px;top:350px;width:62px;height:14px;box-sizing:border-box;border:1px solid #363636;border-radius:2px;background:linear-gradient(#6c6c6c,#585858)"></div>
<div class="t ob" style="left:826px;top:351.75px;font-size:10.5px;color:#f0f0f0">类型</div>
<svg style="left:862.5px;top:353.0px" width="5" height="8"><path d="M0.2,3L2.5,0.4L4.8,3zM0.2,5L2.5,7.6L4.8,5z" fill="#e8e8e8"/></svg>
<svg style="left:815px;top:352px" width="10" height="10"><circle cx="5" cy="4" r="3" fill="none" stroke="#e8e8e8" stroke-width="1.3"/><path d="M3.2,6.4l-2,2.8" stroke="#e8e8e8" stroke-width="1.4"/></svg>
<svg style="left:883px;top:352px" width="11" height="10"><rect x="0.5" y="0.5" width="10" height="9" fill="none" stroke="#d8d8d8"/><path d="M1.5,8.5l2.5,-3l2,2l1.5,-1.5l2,2.5z" fill="#d8d8d8"/><circle cx="7.5" cy="3" r="1" fill="#d8d8d8"/></svg>
<svg style="left:902px;top:352px" width="10" height="10"><circle cx="5" cy="5" r="4.3" fill="none" stroke="#d8d8d8" stroke-width="1.2"/><path d="M8,1.9a4.3,4.3 0 0 1 -6,6.2z" fill="#d8d8d8"/></svg>
<div class="t" style="left:920px;top:350.5px;font-family:'Liberation Serif',serif;font-size:12.5px;font-weight:bold;color:#d8d8d8">T</div>
<svg style="left:938px;top:352px" width="11" height="10"><rect x="2" y="2" width="7" height="6" fill="none" stroke="#d8d8d8" stroke-width="1.1"/><rect x="0" y="0" width="3" height="3" fill="#d8d8d8"/><rect x="8" y="0" width="3" height="3" fill="#d8d8d8"/><rect x="0" y="7" width="3" height="3" fill="#d8d8d8"/><rect x="8" y="7" width="3" height="3" fill="#d8d8d8"/></svg>
<svg style="left:956px;top:351px" width="11" height="11"><path d="M3,0.5h5l2.5,2.5v7.5h-7.5z" fill="none" stroke="#d8d8d8" stroke-width="1.1"/><rect x="0" y="6" width="5.5" height="5" fill="#d8d8d8"/><path d="M8,0.5v2.5h2.5" fill="none" stroke="#d8d8d8"/></svg>
<div class="a" style="left:978px;top:351px;width:7px;height:10px;border-radius:1px;background:linear-gradient(#2a2a2a,#787878)"></div>
<div class="a" style="left:810px;top:371px;width:84px;height:14px;box-sizing:border-box;border:1px solid #363636;border-radius:2px;background:linear-gradient(#6c6c6c,#585858)"></div>
<div class="t ob" style="left:816px;top:372.75px;font-size:10.5px;color:#f0f0f0">正常</div>
<svg style="left:884.5px;top:374.0px" width="5" height="8"><path d="M0.2,3L2.5,0.4L4.8,3zM0.2,5L2.5,7.6L4.8,5z" fill="#e8e8e8"/></svg>
<div class="t ob" style="left:900.5px;top:373px;color:#ececec">不透明度:</div>
<div class="a" style="left:943px;top:371px;width:26px;height:14px;background:#3a3a3a;border:1px solid #2e2e2e;box-sizing:border-box"></div>
<div class="t" style="left:945.5px;top:373.5px;font-size:9.5px;color:#f0f0f0;transform:scaleX(.9);transform-origin:0 0">60%</div>
<div class="a" style="left:971px;top:371px;width:13px;height:14px;background:linear-gradient(#727272,#626262);border:1px solid #4a4a4a;box-sizing:border-box;border-radius:1px"></div>
<svg style="left:975px;top:377px" width="5" height="3"><path d="M0,0h5l-2.5,3z" fill="#f0f0f0"/></svg>
<div class="t ob" style="left:811px;top:393.5px;color:#ececec">锁定:</div>
<div class="a" style="left:840px;top:396px;width:9px;height:9px;background:#8a8a8a;background-image:linear-gradient(45deg,#5e5e5e 25%,transparent 25%,transparent 75%,#5e5e5e 75%),linear-gradient(45deg,#5e5e5e 25%,transparent 25%,transparent 75%,#5e5e5e 75%);background-size:4.5px 4.5px;background-position:0 0,2.25px 2.25px"></div>
<svg style="left:857px;top:394px" width="10" height="11"><path d="M9.5,0.5l-5,6" stroke="#d8d8d8" stroke-width="1.5"/><path d="M0.5,10c1.5,0 2.2,-0.5 2.6,-1.8c0.4,-1 1.8,-1.2 2.6,-0.4c0.8,0.8 0.6,1.8 -0.3,2.4c-1.4,0.9 -3.4,0.8 -4.9,-0.2z" fill="#d8d8d8"/></svg>
<svg style="left:872px;top:394px" width="11" height="11"><path d="M5.5,1v9M1,5.5h9" stroke="#d8d8d8" stroke-width="1.2"/><path d="M5.5,0l2,2.4h-4zM5.5,11l2,-2.4h-4zM0,5.5l2.4,-2v4zM11,5.5l-2.4,-2v4z" fill="#d8d8d8"/></svg>
<svg style="left:890px;top:394px" width="9" height="11"><rect x="0.5" y="4.5" width="7.5" height="5.5" rx="0.8" fill="#d8d8d8"/><path d="M2,4.5v-1.6a2.2,2.2 0 0 1 4.4,0v1.6" fill="none" stroke="#d8d8d8" stroke-width="1.4"/><rect x="4" y="7" width="1" height="2.2" fill="#444"/></svg>
<div class="t ob" style="left:919px;top:393.5px;color:#ececec">填充:</div>
<div class="a" style="left:943px;top:392px;width:26px;height:14px;background:#3a3a3a;border:1px solid #2e2e2e;box-sizing:border-box"></div>
<div class="t" style="left:945.5px;top:394.5px;font-size:9.5px;color:#f0f0f0;transform:scaleX(.9);transform-origin:0 0">100%</div>
<div class="a" style="left:971px;top:392px;width:13px;height:14px;background:linear-gradient(#727272,#626262);border:1px solid #4a4a4a;box-sizing:border-box;border-radius:1px"></div>
<svg style="left:975px;top:398px" width="5" height="3"><path d="M0,0h5l-2.5,3z" fill="#f0f0f0"/></svg>
<div class="a" style="left:807px;top:409px;width:179px;height:286px;background:#444"></div>
<div class="a" style="left:986px;top:409px;width:10px;height:286px;background:#404040"></div>
<div class="a" style="left:807px;top:408px;width:190px;height:1px;background:#3a3a3a"></div>
<div class="a" style="left:807px;top:410px;width:179px;height:31px;background:#535353"></div><div class="a" style="left:830px;top:410px;width:156px;height:31px;background:#697d98"></div><div class="a" style="left:807px;top:440px;width:179px;height:1px;background:#3e4756"></div><div class="a" style="left:829px;top:410px;width:1px;height:31px;background:#484848"></div>
<div class="a" style="left:807px;top:441px;width:179px;height:31px;background:#535353"></div><div class="a" style="left:830px;top:441px;width:156px;height:31px;background:#697d98"></div><div class="a" style="left:807px;top:471px;width:179px;height:1px;background:#3e4756"></div><div class="a" style="left:829px;top:441px;width:1px;height:31px;background:#484848"></div>
<div class="a" style="left:807px;top:472px;width:179px;height:30px;background:#535353"></div><div class="a" style="left:807px;top:501px;width:179px;height:1px;background:#3c3c3c"></div><div class="a" style="left:829px;top:472px;width:1px;height:30px;background:#484848"></div>
<svg style="left:812px;top:422px" width="13" height="8"><path d="M0.3,4c2,-3.6 10.4,-3.6 12.4,0c-2,3.4 -10.4,3.4 -12.4,0z" fill="#cfcfcf"/><circle cx="6.5" cy="3.6" r="2.3" fill="#3a3a3a"/><circle cx="5.8" cy="2.8" r="0.8" fill="#e8e8e8"/></svg>
<svg style="left:812px;top:453px" width="13" height="8"><path d="M0.3,4c2,-3.6 10.4,-3.6 12.4,0c-2,3.4 -10.4,3.4 -12.4,0z" fill="#cfcfcf"/><circle cx="6.5" cy="3.6" r="2.3" fill="#3a3a3a"/><circle cx="5.8" cy="2.8" r="0.8" fill="#e8e8e8"/></svg>
<svg style="left:812px;top:483px" width="13" height="8"><path d="M0.3,4c2,-3.6 10.4,-3.6 12.4,0c-2,3.4 -10.4,3.4 -12.4,0z" fill="#cfcfcf"/><circle cx="6.5" cy="3.6" r="2.3" fill="#3a3a3a"/><circle cx="5.8" cy="2.8" r="0.8" fill="#e8e8e8"/></svg>
<div class="t" style="left:837.5px;top:417px;font-family:'Liberation Serif',serif;font-size:17px;color:#e6e9ee;transform:scaleX(.95);transform-origin:0 0">T</div>
<div class="t ob" style="left:864px;top:421.5px;color:#f2f2f2">已通过</div>
<div class="a" style="left:832px;top:443px;width:25px;height:26px;background:#2b2b2b"></div>
<div class="a" style="left:833px;top:444px;width:23px;height:24px;background:#fff;background-image:linear-gradient(45deg,#ccc 25%,transparent 25%,transparent 75%,#ccc 75%),linear-gradient(45deg,#ccc 25%,transparent 25%,transparent 75%,#ccc 75%);background-size:6px 6px;background-position:0 0,3px 3px"></div>
<svg style="left:833px;top:444px" width="23" height="24"><circle cx="11.5" cy="12" r="10.6" fill="none" stroke="#8fd3a4" stroke-width="1.6"/><circle cx="11.5" cy="12" r="8.6" fill="none" stroke="#9fd9b1" stroke-width="0.9"/><circle cx="11.5" cy="12" r="5.4" fill="none" stroke="#a8dcb8" stroke-width="0.8"/></svg>
<div class="t ob" style="left:864px;top:452px;color:#f2f2f2">图层 <span class="l">1</span></div>
<div class="a" style="left:832px;top:473px;width:25px;height:26px;background:#2b2b2b"></div>
<div class="a" style="left:833px;top:474px;width:23px;height:24px;background:#fff"></div>
<div class="t ob" style="left:866px;top:482.5px;color:#f2f2f2;font-size:10px;font-style:italic;transform:scaleX(.84)">背景</div>
<svg style="left:964px;top:481px" width="9" height="11"><rect x="0.5" y="5" width="8" height="5.5" fill="none" stroke="#d8d8d8" stroke-width="1.1"/><path d="M2.2,5v-1.8a2.3,2.3 0 0 1 4.6,0v1.8" fill="none" stroke="#d8d8d8" stroke-width="1.2"/><rect x="3.8" y="7" width="1.4" height="1.6" fill="#d8d8d8"/></svg>
<div class="a" style="left:807px;top:695px;width:190px;height:13px;background:#535353"></div>
<svg style="left:841px;top:698px" width="12" height="7"><rect x="0.7" y="0.7" width="6" height="5.2" rx="2.6" fill="none" stroke="#d0d0d0" stroke-width="1.4"/><rect x="5.3" y="0.7" width="6" height="5.2" rx="2.6" fill="none" stroke="#d0d0d0" stroke-width="1.4"/><path d="M3.5,3.3h5" stroke="#d0d0d0" stroke-width="1.4"/></svg>
<div class="t" style="left:863px;top:695.5px;font-family:'Liberation Serif',serif;font-style:italic;font-size:11px;color:#909090">fx</div>
<div class="a" style="left:883px;top:697px;width:11px;height:9px;background:#8a8a8a"></div><div class="a" style="left:886px;top:699px;width:5px;height:5px;border-radius:50%;background:#5c5c5c"></div>
<svg style="left:904px;top:696px" width="13" height="11"><circle cx="4.5" cy="5" r="4" fill="none" stroke="#d0d0d0" stroke-width="1.2"/><path d="M7.3,2.2a4,4 0 0 1 -5.6,5.6z" fill="#d0d0d0"/><path d="M10.5,9h2.5l-1.25,1.6z" fill="#d0d0d0"/></svg>
<svg style="left:925px;top:696px" width="10" height="9"><path d="M0,1h3.6l1,1.2h5v6.8h-9.6z" fill="#d0d0d0"/></svg>
<svg style="left:946px;top:696px" width="9" height="10"><path d="M0,0h8.5v9.5h-5.5v-3.5h-3z" fill="#d0d0d0"/><path d="M0,7l2.2,2.5" stroke="#d0d0d0"/></svg>
<svg style="left:966px;top:696px" width="9" height="10"><path d="M0,1.8h9M3,1.8v-1.3h3v1.3" fill="none" stroke="#d0d0d0" stroke-width="1.1"/><path d="M1,3h7l-0.6,7h-5.8z" fill="#d0d0d0"/><path d="M3.2,4v5M5.8,4v5" stroke="#535353" stroke-width=".8"/></svg>
<svg style="left:214px;top:196px" width="381" height="381" viewBox="0 0 381 381"><circle cx="190.3" cy="190.5" r="182" fill="none" stroke="#7ccf94" stroke-width="12"/><circle cx="190.3" cy="190.5" r="153.8" fill="none" stroke="#7ccf94" stroke-width="7.6"/><path d="M97.24,171.40A95,95 0 0 1 250.09,116.67M283.36,209.60A95,95 0 0 1 130.51,264.33" fill="none" stroke="#7ccf94" stroke-width="6"/><polygon points="79.21,109.01 87.55,110.52 94.30,105.38 95.44,113.79 102.41,118.62 94.77,122.29 92.33,130.42 86.47,124.29 77.99,124.48 82.01,117.01" fill="#7ccf94"/><polygon points="125.78,66.65 132.10,72.30 140.54,71.44 137.12,79.20 140.54,86.96 132.10,86.10 125.78,91.75 123.99,83.47 116.66,79.20 123.99,74.93" fill="#7ccf94"/><polygon points="190.42,49.53 194.43,57.00 202.65,59.09 196.78,65.21 197.34,73.67 189.70,69.98 181.83,73.13 182.98,64.73 177.55,58.21 185.90,56.71" fill="#7ccf94"/><polygon points="258.59,63.55 260.09,71.90 267.27,76.42 259.80,80.43 257.71,88.65 251.59,82.78 243.13,83.34 246.82,75.70 243.67,67.83 252.07,68.98" fill="#7ccf94"/><polygon points="127.10,320.46 126.33,312.02 119.58,306.89 127.37,303.55 130.16,295.54 135.75,301.92 144.22,302.10 139.88,309.38 142.33,317.50 134.06,315.62" fill="#7ccf94"/><polygon points="192.42,334.13 188.54,326.59 180.36,324.36 186.34,318.34 185.92,309.87 193.49,313.69 201.42,310.69 200.13,319.07 205.44,325.67 197.07,327.03" fill="#7ccf94"/><polygon points="258.34,321.51 251.55,316.43 243.22,318.02 245.95,309.99 241.87,302.56 250.35,302.67 256.15,296.49 258.66,304.59 266.33,308.21 259.41,313.09" fill="#7ccf94"/><polygon points="314.10,275.84 305.87,273.82 298.82,278.53 298.20,270.08 291.54,264.83 299.39,261.62 302.32,253.67 307.79,260.14 316.26,260.47 311.80,267.68" fill="#7ccf94"/><text x="190.3" y="226.5" transform="rotate(-20 190.3 190.5)" text-anchor="middle" font-family="'Liberation Sans','Noto Sans CJK SC',sans-serif" font-weight="300" font-size="82" fill="#8ed5a3"><tspan dx="-4" dy="0.5" font-size="86">已</tspan><tspan dx="0" dy="-0.5">通过</tspan></text></svg>
<svg style="left:0;top:0" width="1000" height="711"><rect x="897.3" y="363.1" width="93" height="28.9" fill="none" stroke="#ee3535" stroke-width="2.9"/><rect x="809.4" y="408" width="179.2" height="65.5" fill="none" stroke="#ee3535" stroke-width="2.9"/><path d="M620,354.5 L633,348 L633,351 L864,360.6 L864,361.6 L633,358.5 L633,360.8 Z" fill="#ee3535"/><path d="M886.8,381.4 L873.4,382.8 L876,386 L848.6,406.4 L849.6,407.6 L878.6,389.4 L881,392.4 Z" fill="#ee3535"/></svg>
</body>
</html>
